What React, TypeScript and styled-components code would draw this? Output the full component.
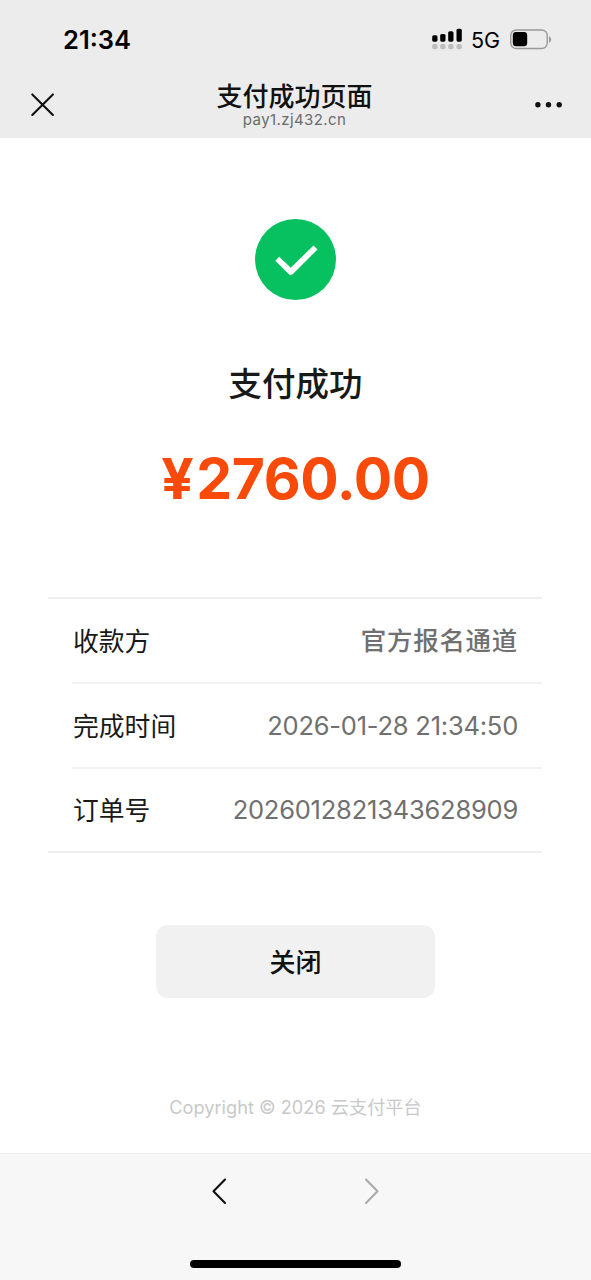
import React from 'react';
import styled, { createGlobalStyle } from 'styled-components';

const GlobalStyle = createGlobalStyle`
  * { box-sizing: border-box; }
  body {
    margin: 0;
    background: #fff;
    color: #191919;
    font-family: Inter, "Noto Sans CJK SC", sans-serif;
  }
`;

const Screen = styled.div`
  width: 591px;
  height: 1280px;
  display: flex;
  flex-direction: column;
  background: #fff;
  overflow: hidden;
`;

const Header = styled.header`
  height: 138px;
  flex: none;
  background: #ececec;
`;

const StatusBar = styled.div`
  height: 78px;
  padding: 0 39px 0 63px;
  display: flex;
  align-items: center;
  justify-content: space-between;
`;

const Clock = styled.div`
  padding-top: 2px;
  font-size: 25.5px;
  font-weight: 600;
  line-height: 30px;
  color: #000;
`;

const StatusIcons = styled.div`
  display: flex;
  align-items: center;
`;

const Network = styled.span`
  margin: 2px 10px 0 8px;
  font-size: 21.5px;
  line-height: 28px;
  color: #000;
`;

const NavBar = styled.div`
  height: 53px;
  padding: 0 28px 0 30px;
  display: grid;
  grid-template-columns: 28px 1fr 28px;
  align-items: center;

  svg { display: block; }
`;

const TitleBlock = styled.div`
  display: flex;
  flex-direction: column;
  align-items: center;
  padding-right: 4px;
`;

const Title = styled.h1`
  margin: 0;
  font-size: 26px;
  font-weight: 500;
  line-height: 32px;
  color: #111;
`;

const Host = styled.div`
  margin-top: -1px;
  padding-bottom: 1px;
  font-size: 15px;
  line-height: 16px;
  letter-spacing: 0.4px;
  color: #6b6b6b;
`;

const Main = styled.main`
  flex: 1;
  display: flex;
  flex-direction: column;
  align-items: center;
  padding-top: 81px;
`;

const Result = styled.h2`
  margin: 60px 0 0;
  font-size: 33.5px;
  font-weight: 500;
  line-height: 48px;
  color: #191919;
`;

const Amount = styled.div`
  margin-top: 35px;
  font-size: 57px;
  font-weight: 700;
  line-height: 72px;
  letter-spacing: -0.4px;
  color: #fa4a0a;
`;

const Currency = styled.span`
  margin-right: 3px;
`;

const Details = styled.dl`
  width: 494px;
  margin: 82px 1px 0 0;
  border-top: 2px solid #efefef;
  border-bottom: 2px solid #efefef;
`;

const DetailRow = styled.div`
  height: 85px;
  margin-left: 24px;
  padding-right: 24px;
  display: flex;
  align-items: center;
  justify-content: space-between;

  & + & { border-top: 2px solid #f1f1f1; }
  &:first-child { height: 83px; }
  &:last-child { height: 84px; }
`;

const Label = styled.dt`
  padding: 2px 0 0 1px;
  font-size: 25.8px;
  line-height: 36px;
`;

const Value = styled.dd<{ $strong?: boolean }>`
  margin: 0;
  font-size: 25.5px;
  line-height: 36px;
  font-weight: ${({ $strong }) => ($strong ? 500 : 400)};
  letter-spacing: ${({ $strong }) => ($strong ? '0.7px' : '-0.22px')};
  color: #707070;
`;

const CloseButton = styled.button`
  width: 279px;
  height: 73px;
  margin-top: 72px;
  padding: 2px 0 0;
  border: 0;
  border-radius: 12px;
  background: #f1f1f1;
  color: #111;
  font: 500 26px/36px Inter, "Noto Sans CJK SC", sans-serif;
`;

const Copyright = styled.footer`
  margin-top: 96px;
  font-size: 18.2px;
  line-height: 26px;
  color: #c9c9c9;
`;

const Toolbar = styled.nav`
  height: 127px;
  flex: none;
  border-top: 1px solid #eeeeee;
  background: #f7f7f7;
  display: flex;
  flex-direction: column;
  align-items: center;
  justify-content: space-between;
  padding: 23px 0 12px;
`;

const HistoryButtons = styled.div`
  width: 169px;
  display: flex;
  justify-content: space-between;
`;

const HomeIndicator = styled.div`
  width: 211px;
  height: 8px;
  border-radius: 4px;
  background: #000;
`;

const signalBars = [
  { x: 0, y: 7.3, h: 6.4 },
  { x: 8, y: 6, h: 7.7 },
  { x: 16, y: 3.2, h: 10.5 },
  { x: 24.3, y: 0.7, h: 13 },
];

const Signal = () => (
  <svg width="31" height="22" viewBox="0 0 31 22">
    {signalBars.map(({ x, y, h }) => (
      <g key={x}>
        <rect x={x + 0.2} y={y} width="5.3" height={h} rx="1.6" fill="#000" />
        <rect x={x + 0.2} y="16" width="5.3" height="5.3" rx="2" fill="#bdbdbd" />
      </g>
    ))}
  </svg>
);

const Battery = () => (
  <svg width="42" height="21" viewBox="0 0 42 21">
    <rect x="0.75" y="0.95" width="36.5" height="18.6" rx="5.5" fill="none" stroke="#999" strokeWidth="1.4" />
    <rect x="2.8" y="3" width="14.4" height="14.2" rx="3.2" fill="#000" />
    <path d="M39 7.2c1.4.5 2.1 1.6 2.1 3.2s-.7 2.7-2.1 3.2z" fill="#999" />
  </svg>
);

const rows = [
  { label: '收款方', value: '官方报名通道', strong: true },
  { label: '完成时间', value: '2026-01-28 21:34:50' },
  { label: '订单号', value: '2026012821343628909' },
];

export default function App() {
  return (
    <>
      <GlobalStyle />
      <Screen>
        <Header>
          <StatusBar>
            <Clock>21:34</Clock>
            <StatusIcons>
              <Signal />
              <Network>5G</Network>
              <Battery />
            </StatusIcons>
          </StatusBar>
          <NavBar>
            <svg width="28" height="28" viewBox="0 0 28 28" fill="none" stroke="#111" strokeWidth="2.1" strokeLinecap="round">
              <path d="M2.3 3.4 22.9 24M22.9 3.4 2.3 24" />
            </svg>
            <TitleBlock>
              <Title>支付成功页面</Title>
              <Host>pay1.zj432.cn</Host>
            </TitleBlock>
            <svg width="28" height="28" viewBox="0 0 28 28" fill="#111">
              <circle cx="2.9" cy="13.7" r="2.7" />
              <circle cx="13.5" cy="13.7" r="2.7" />
              <circle cx="24.2" cy="13.7" r="2.7" />
            </svg>
          </NavBar>
        </Header>
        <Main>
          <svg width="81" height="81" viewBox="0 0 81 81">
            <circle cx="40.5" cy="40.5" r="40.5" fill="#07c160" />
            <path d="M20.3 41.8 24.2 37.7 35.8 48.7 58.5 26.4 62.5 30.5 37.9 54.9Q35.8 56.9 33.7 54.9Z" fill="#fff" />
          </svg>
          <Result>支付成功</Result>
          <Amount><Currency>¥</Currency>2760.00</Amount>
          <Details>
            {rows.map(({ label, value, strong }) => (
              <DetailRow key={label}>
                <Label>{label}</Label>
                <Value $strong={strong}>{value}</Value>
              </DetailRow>
            ))}
          </Details>
          <CloseButton type="button">关闭</CloseButton>
          <Copyright>Copyright © 2026 云支付平台</Copyright>
        </Main>
        <Toolbar>
          <HistoryButtons>
            <svg width="16" height="28" viewBox="0 0 16 28" fill="none" stroke="#111" strokeWidth="2.1" strokeLinecap="round" strokeLinejoin="round">
              <path d="M14 2.5 2.5 14.3 14 26" />
            </svg>
            <svg width="16" height="28" viewBox="0 0 16 28" fill="none" stroke="#aaa" strokeWidth="2.1" strokeLinecap="round" strokeLinejoin="round">
              <path d="M2 2.5 13.5 14.3 2 26" />
            </svg>
          </HistoryButtons>
          <HomeIndicator />
        </Toolbar>
      </Screen>
    </>
  );
}
